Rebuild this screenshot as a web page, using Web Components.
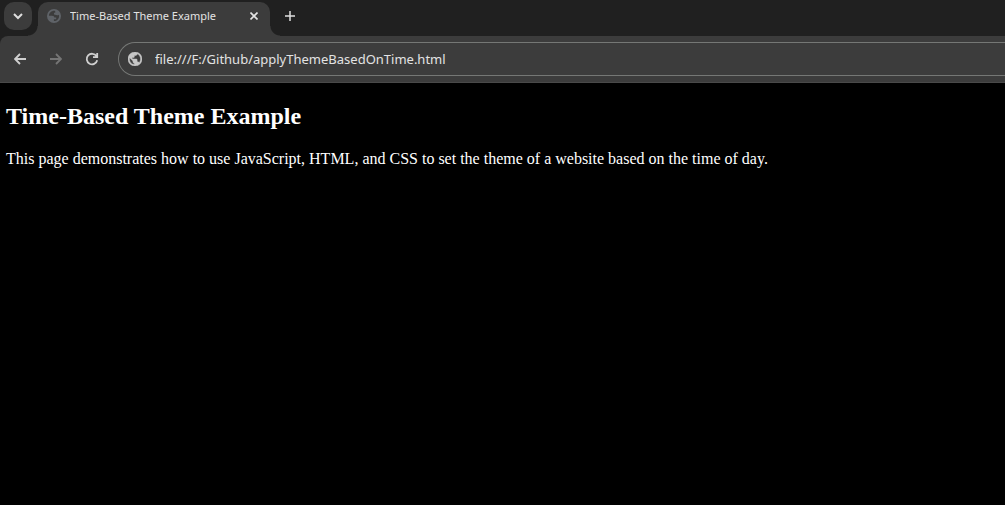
<!DOCTYPE html>
<html lang="en">
<head>
<meta charset="utf-8">
<title>Time-Based Theme Example</title>
<style>
  html, body { margin: 0; height: 100%; background: #000; }
</style>
</head>
<body>
<browser-window>
  <tab-strip slot="chrome"><browser-tab>Time-Based Theme Example</browser-tab></tab-strip>
  <browser-toolbar slot="chrome" url="file:///F:/Github/applyThemeBasedOnTime.html"></browser-toolbar>
  <themed-page>
    <span slot="title">Time-Based Theme Example</span>
    This page demonstrates how to use JavaScript, HTML, and CSS to set the theme of a website based on the time of day.
  </themed-page>
</browser-window>

<script>
const GLOBE = '<svg viewBox="2 2 20 20" aria-hidden="true"><path fill="currentColor" stroke="currentColor" stroke-width=".7" d="M12 2C6.48 2 2 6.48 2 12s4.480 10 10 10 10-4.480 10-10S17.520 2 12 2zm-1 17.930c-3.950-.490-7-3.850-7-7.930 0-.620.080-1.210.210-1.790L9 15v1c0 1.100.900 2 2 2v1.930zm6.900-2.540c-.260-.810-1-1.390-1.900-1.390h-1v-3c0-.550-.450-1-1-1H8v-2h2c.550 0 1-.450 1-1V7h2c1.100 0 2-.900 2-2v-.410c2.930 1.190 5 4.060 5 7.410 0 2.080-.800 3.970-2.100 5.390z"/></svg>';
const PAGE_GLOBE = '<svg viewBox="0 0 14 14" aria-hidden="true"><circle cx="7" cy="7" r="7" fill="currentColor"/><path fill="#3c3c3c" d="M8.200 1.900C5 1.300 2 3.700 1.900 6.800H5c1.500 0 2.300.800 2.300 1.800h1.900v1.700H6.900v1.800c3 .100 5.200-2.300 5.200-5.100 0-.500-.100-.900-.200-1.300-.500.500-1.100.700-1.800.600L7 5.500V3.800h1.200z"/></svg>';

const BASE = `
  :host, * { box-sizing: border-box; }
  button { appearance: none; border: 0; padding: 0; margin: 0; background: none; color: inherit; display: grid; place-items: center; flex: none; }
  svg { display: block; }
`;

function define(name, css, html, setup) {
  customElements.define(name, class extends HTMLElement {
    constructor() {
      super();
      this.attachShadow({ mode: 'open' }).innerHTML = `<style>${BASE}${css}</style>${html}`;
    }
    connectedCallback() { if (setup) setup(this); }
  });
}

define('browser-window', `
  :host { display: flex; flex-direction: column; min-height: 100%; background: #000; overflow: hidden; }
  main { flex: 1; }
`, '<slot name="chrome"></slot><main><slot></slot></main>');

define('tab-strip', `
  :host { display: flex; gap: 6px; height: 36px; padding: 2px 4px 0; background: #202020; color: #dedede; }
  .search { width: 28px; height: 28px; border-radius: 10px; background: #3c3c3c; }
  .new { width: 28px; height: 28px; }
`, `
  <button class="search" aria-label="Search tabs"><svg width="10" height="10" viewBox="0 0 10 10" fill="none" stroke="currentColor" stroke-width="2"><path d="M1 3l4 4 4-4"/></svg></button>
  <slot></slot>
  <button class="new" aria-label="New tab"><svg width="12" height="12" viewBox="0 0 12 12" stroke="currentColor" stroke-width="1.500"><path d="M6 1v10M1 6h10"/></svg></button>
`);

define('browser-tab', `
  :host { display: flex; align-items: center; gap: 9px; position: relative; flex: 0 1 232px; min-width: 0; height: 34px; padding: 0 8px 6px 9px;
    border-radius: 10px 10px 0 0; background: #3c3c3c; color: #e3e3e3; font: 11px/16px "Noto Sans", "Open Sans", sans-serif; }
  :host::before, :host::after { content: ""; position: absolute; bottom: 0; width: 10px; height: 10px; }
  :host::before { right: 100%; background: radial-gradient(circle at 0 0, transparent 9px, #3c3c3c 10px); }
  :host::after { left: 100%; background: radial-gradient(circle at 100% 0, transparent 9px, #3c3c3c 10px); }
  .icon { flex: none; width: 14px; height: 14px; color: #5f6368; }
  .label { flex: 1; min-width: 0; white-space: nowrap; overflow: hidden; }
  button { width: 16px; height: 16px; }
`, `
  <span class="icon">${PAGE_GLOBE}</span><span class="label"><slot></slot></span>
  <button aria-label="Close tab"><svg width="8" height="8" viewBox="0 0 8 8" stroke="currentColor" stroke-width="1.600"><path d="M.5 .5l7 7M7.500 .5l-7 7"/></svg></button>
`);

define('browser-toolbar', `
  :host { display: block; background: #202020; }
  nav { display: flex; align-items: center; height: 47px; padding-left: 6px; background: #3c3c3c; border-bottom: 1px solid #494949; border-top-left-radius: 8px; color: #d0d0d0; }
  button { width: 28px; height: 28px; margin-right: 8px; }
  button:disabled { color: #757575; }
  label { display: flex; align-items: center; flex: 1; min-width: 0; height: 34px; margin-left: 4px; padding-left: 9px; gap: 13px;
    border: 1px solid #757775; border-right: 0; border-radius: 17px 0 0 17px; }
  .icon { flex: none; width: 14px; height: 14px; color: #c7c7c7; }
  input { flex: 1; min-width: 0; height: 24px; border: 0; padding: 0; outline: 0; background: none; color: #e3e3e3; font: 13px/20px "Noto Sans", "Open Sans", sans-serif; }
`, `
  <nav aria-label="Navigation">
    <button aria-label="Back"><svg width="12" height="12" viewBox="0 0 12 12" fill="none" stroke="currentColor" stroke-width="1.800"><path d="M12 6H1M6 1L1 6l5 5"/></svg></button>
    <button aria-label="Forward" disabled><svg width="12" height="12" viewBox="0 0 12 12" fill="none" stroke="currentColor" stroke-width="1.800"><path d="M0 6h11M6 1l5 5-5 5"/></svg></button>
    <button aria-label="Reload"><svg width="14" height="14" viewBox="0 0 14 14" fill="none" stroke="currentColor" stroke-width="1.800"><path d="M11.500 4.200A5.300 5.300 0 1 0 12.200 8.300M12.200 1v4.200H8"/></svg></button>
    <label><span class="icon">${GLOBE}</span><input type="text" aria-label="Address" spellcheck="false"></label>
  </nav>
`, host => { host.shadowRoot.querySelector('input').value = host.getAttribute('url'); });

define('themed-page', `
  :host { display: block; padding: 20px 6px; color: #fff; background: #000; font: 16px/18px "Liberation Serif", "Times New Roman", serif; }
  h2 { margin: 0 0 20px; font-size: 24px; line-height: 27px; }
  p { margin: 0; }
`, '<h2><slot name="title"></slot></h2><p><slot></slot></p>');
</script>
</body>
</html>
